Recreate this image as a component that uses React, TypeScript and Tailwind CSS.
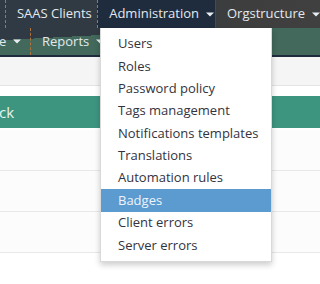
import React from 'react';

const menu = [
  'Users',
  'Roles',
  'Password policy',
  'Tags management',
  'Notifications templates',
  'Translations',
  'Automation rules',
  'Badges',
  'Client errors',
  'Server errors',
];

function Caret() {
  return (
    <svg width="8" height="5" viewBox="0 0 8 5" className="ml-[7px] shrink-0">
      <path d="M0 0.5 L8 0.5 L4 4.5 Z" fill="#e8edf1" />
    </svg>
  );
}

export default function App() {
  return (
    <div className="relative h-[284px] w-[320px] overflow-hidden bg-white font-['Open_Sans',sans-serif]">
      {/* header */}
      <div className="bg-[linear-gradient(90deg,#2f3a45_0%,#333a40_55%,#3e3e3e_75%,#404040_100%)]">
        <div className="flex h-[28px] items-stretch text-[13px] text-[#e3e9ee]">
          <div className="w-[5px]" />
          <div className="flex w-[94px] items-center border-l border-dashed border-[#b0733c] pl-[11px]">
            SAAS Clients
          </div>
          <div className="flex w-[120px] items-center border-l border-dashed border-[#b0733c] bg-[#1f2c3d] pl-[11px]">
            Administration
            <Caret />
          </div>
          <div className="flex flex-1 items-center border-l border-[#4a4a4a] pl-[11px] whitespace-nowrap">
            Orgstructure
            <Caret />
          </div>
        </div>
        <div className="flex h-[29px] items-stretch border-b-2 border-[#1f2c3d] bg-[linear-gradient(177deg,transparent_0%,transparent_28%,#42695b_28%,#42695b_100%)] text-[13px] text-[#e3e9ee]">
          <div className="flex w-[30px] items-center">
            <span className="-ml-[1px]">e</span>
            <Caret />
          </div>
          <div className="flex items-center border-l border-dashed border-[#b0733c] pl-[11px]">
            Reports
            <Caret />
          </div>
        </div>
      </div>

      {/* page content */}
      <div className="h-[29px] border-b border-[#e3e3e3] bg-[#f5f5f5]" />
      <div className="h-[10px]" />
      <div className="flex h-[32px] items-center bg-[#3d9580] text-[15px] text-[#e6f4ef]">
        <span className="-ml-[1px]">ck</span>
      </div>
      <div className="h-[2px]" />
      <div className="h-[41px] border-b border-[#e8e8e8] bg-[#fcfcfc]" />
      <div className="h-[41px] border-b border-[#e8e8e8] bg-[#fcfcfc]" />
      <div className="h-[41px] border-b border-[#e8e8e8] bg-[#fcfcfc]" />

      {/* dropdown */}
      <div className="absolute left-[100px] top-[28px] w-[172px] border border-[rgba(0,0,0,0.15)] border-t-0 bg-white py-[5px] shadow-[0_3px_6px_rgba(0,0,0,0.2)]">
        {menu.map((m) => (
          <div
            key={m}
            className={`flex h-[22.35px] items-center pl-[17px] text-[13px] whitespace-nowrap ${
              m === 'Badges' ? 'bg-[#5b9bd0] text-[#eef4fa]' : 'text-[#333340]'
            }`}
          >
            {m}
          </div>
        ))}
      </div>
    </div>
  );
}
